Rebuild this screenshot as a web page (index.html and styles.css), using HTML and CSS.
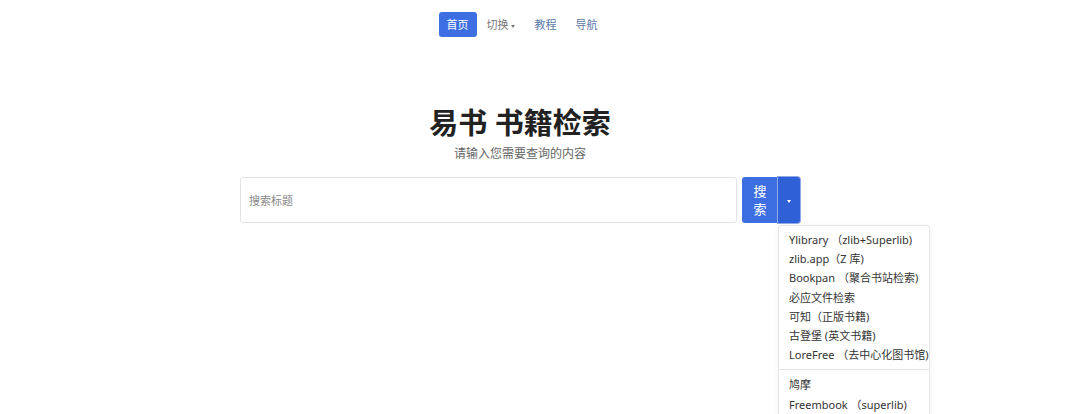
FILE: index.html
```
<!DOCTYPE html>
<html lang="zh-CN">
<head>
    <meta charset="UTF-8">
    <meta name="viewport" content="width=device-width, initial-scale=1.0">
    <title>易书 书籍检索</title>
    <link rel="stylesheet" href="styles.css">
</head>
<body>
    <div class="page">
        <nav class="topnav">
            <a href="#" class="nav-link active">首页</a>
            <a href="#" class="nav-link muted">切换 <span class="caret"></span></a>
            <a href="#" class="nav-link">教程</a>
            <a href="#" class="nav-link">导航</a>
        </nav>
        <section class="hero">
            <h1>易书 书籍检索</h1>
            <p class="subtitle">请输入您需要查询的内容</p>
        </section>
        <div class="search-wrap">
            <div class="search">
                <input type="text" class="search-input" placeholder="搜索标题">
                <div class="btn-group">
                    <button class="btn-search">搜<br>索</button>
                    <button class="btn-toggle"><span class="caret white"></span></button>
                </div>
            </div>
            <div class="source-list">
                <div class="source">Ylibrary （zlib+Superlib)</div>
                <div class="source">zlib.app（Z 库)</div>
                <div class="source">Bookpan （聚合书站检索)</div>
                <div class="source">必应文件检索</div>
                <div class="source">可知（正版书籍)</div>
                <div class="source">古登堡 (英文书籍)</div>
                <div class="source">LoreFree （去中心化图书馆)</div>
                <div class="source-sep"></div>
                <div class="source">鸠摩</div>
                <div class="source">Freembook （superlib)</div>
            </div>
        </div>
    </div>
</body>
</html>
```

FILE: styles.css
```
body {
    margin: 0;
    background-color: #fff;
    font-family: "Noto Sans", "Noto Sans CJK SC", sans-serif;
    color: #333;
}
.page {
    width: 1040px;
    display: flex;
    flex-direction: column;
    align-items: center;
}
.topnav {
    display: flex;
    align-items: center;
    gap: 19px;
    padding-top: 12px;
    margin-left: -4px;
}
.nav-link {
    font-size: 11px;
    line-height: 25px;
    color: #5b78a8;
    text-decoration: none;
    border-radius: 3px;
}
.nav-link.active {
    padding: 0 8px;
    margin-right: -9px;
    background-color: #3d6fe3;
    color: #fff;
}
.nav-link.muted {
    color: #777;
}
.caret {
    display: inline-block;
    width: 0;
    height: 0;
    border-left: 2.5px solid transparent;
    border-right: 2.5px solid transparent;
    border-top: 3px solid #777;
    vertical-align: middle;
}
.caret.white {
    border-top-color: #fff;
}
.hero {
    text-align: center;
    margin-top: 65px;
}
.hero h1 {
    margin: 0;
    font-size: 29px;
    line-height: 42px;
    font-weight: bold;
    color: #222;
}
.subtitle {
    margin: 0;
    font-size: 12px;
    line-height: 20px;
    color: #666;
}
.search-wrap {
    width: 560px;
    margin-top: 13px;
}
.search {
    display: flex;
    gap: 5px;
}
.search-input {
    flex: 1;
    height: 46px;
    box-sizing: border-box;
    border: 1px solid #e2e2e2;
    border-radius: 3px;
    padding: 0 8px;
    font-family: inherit;
    font-size: 11px;
    outline: none;
}
.search-input::placeholder {
    color: #888;
}
.btn-group {
    display: flex;
}
.btn-search, .btn-toggle {
    border: none;
    color: #fff;
    font-family: inherit;
    cursor: pointer;
    height: 46px;
}
.btn-search {
    width: 36px;
    background-color: #3d6fe3;
    border-radius: 3px 0 0 3px;
    font-size: 13px;
    line-height: 18px;
    padding: 0;
}
.btn-toggle {
    width: 22px;
    background-color: #2f60d6;
    border-radius: 0 3px 3px 0;
    box-shadow: 0 0 0 1px #8fa9ea;
    padding: 0;
}
.source-list {
    width: 150px;
    margin: 2px 0 0 538px;
    padding: 4px 0;
    background-color: #fff;
    border: 1px solid #e6e6e6;
    border-radius: 3px;
    box-shadow: 0 2px 6px rgba(0, 0, 0, 0.06);
}
.source {
    font-size: 11px;
    line-height: 19.2px;
    padding: 0 10px;
    color: #333;
    white-space: nowrap;
}
.source-sep {
    height: 1px;
    margin: 5px 0;
    background-color: #e5e5e5;
}
```
